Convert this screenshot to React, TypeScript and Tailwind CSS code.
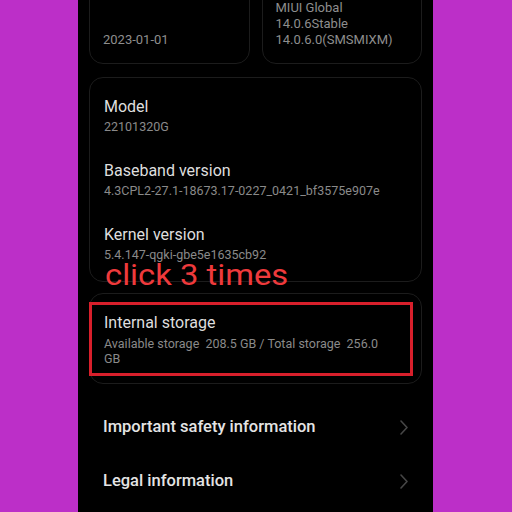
const details = [
  { title: "Model", value: "22101320G" },
  { title: "Baseband version", value: "4.3CPL2-27.1-18673.17-0227_0421_bf3575e907e" },
  { title: "Kernel version", value: "5.4.147-qgki-gbe5e1635cb92" },
];

const links = ["Important safety information", "Legal information"];

function Chevron() {
  return (
    <svg width="8" height="15" viewBox="0 0 8 15" fill="none">
      <path d="M1 1 L7 7.5 L1 14" stroke="#464646" strokeWidth="1.6" strokeLinecap="round" strokeLinejoin="round" />
    </svg>
  );
}

export default function App() {
  return (
    <div className="w-[512px] h-[512px] bg-[#bc2fc8] overflow-hidden pl-[78px] font-['Roboto',sans-serif]">
      <div className="w-[355px] h-full bg-black px-[11px] flex flex-col overflow-hidden">
        {/* top cards, scrolled partly out of view */}
        <div className="grid grid-cols-2 gap-[12px] -mt-[20px] shrink-0">
          <div className="h-[84px] rounded-[14px] border border-[#1c1c1c] flex flex-col justify-end pb-[15px] px-[13px]">
            <span className="text-[13px] leading-[16px] text-[#8e8e8e]">2023-01-01</span>
          </div>
          <div className="h-[84px] rounded-[14px] border border-[#1c1c1c] flex flex-col justify-end pb-[15px] px-[13px] text-[13px] leading-[16px] text-[#8e8e8e]">
            <span>MIUI Global</span>
            <span>14.0.6Stable</span>
            <span>14.0.6.0(SMSMIXM)</span>
          </div>
        </div>

        {/* device details */}
        <div className="relative mt-[13px] rounded-[14px] border border-[#1c1c1c] pt-[19px] pb-[17px] px-[14px] flex flex-col gap-[25px] shrink-0">
          {details.map((d) => (
            <div key={d.title} className="flex flex-col gap-[1px]">
              <span className="text-[16px] leading-[20px] text-[#dedede]">{d.title}</span>
              <span className="text-[12.5px] leading-[18px] text-[#8a8a8a]">{d.value}</span>
            </div>
          ))}
          <span className="absolute left-[15px] top-[183px] text-[29px] leading-[28px] text-[#ee3a3c] whitespace-nowrap origin-left scale-x-[1.13]">
            click 3 times
          </span>
        </div>

        {/* storage */}
        <div className="relative mt-[11px] rounded-[14px] border border-[#1c1c1c] pt-[19px] pb-[17px] px-[14px] flex flex-col gap-[3px] shrink-0">
          <span className="text-[16px] leading-[20px] text-[#dedede]">Internal storage</span>
          <span className="max-w-[290px] text-[12.5px] leading-[15px] text-[#8a8a8a] whitespace-pre-wrap">
            {"Available storage  208.5 GB / Total storage  256.0 GB"}
          </span>
          <div className="absolute -left-[1px] top-[8px] w-[324px] h-[74px] border-[3.5px] border-[#d81f2b]" />
        </div>

        {/* links */}
        <div className="mt-[16px] flex flex-col">
          {links.map((l) => (
            <div key={l} className="h-[54px] flex items-center justify-between pl-[14px] pr-[14px]">
              <span className="text-[16.5px] leading-[20px] font-medium text-[#e4e4e4]">{l}</span>
              <Chevron />
            </div>
          ))}
        </div>
      </div>
    </div>
  );
}
